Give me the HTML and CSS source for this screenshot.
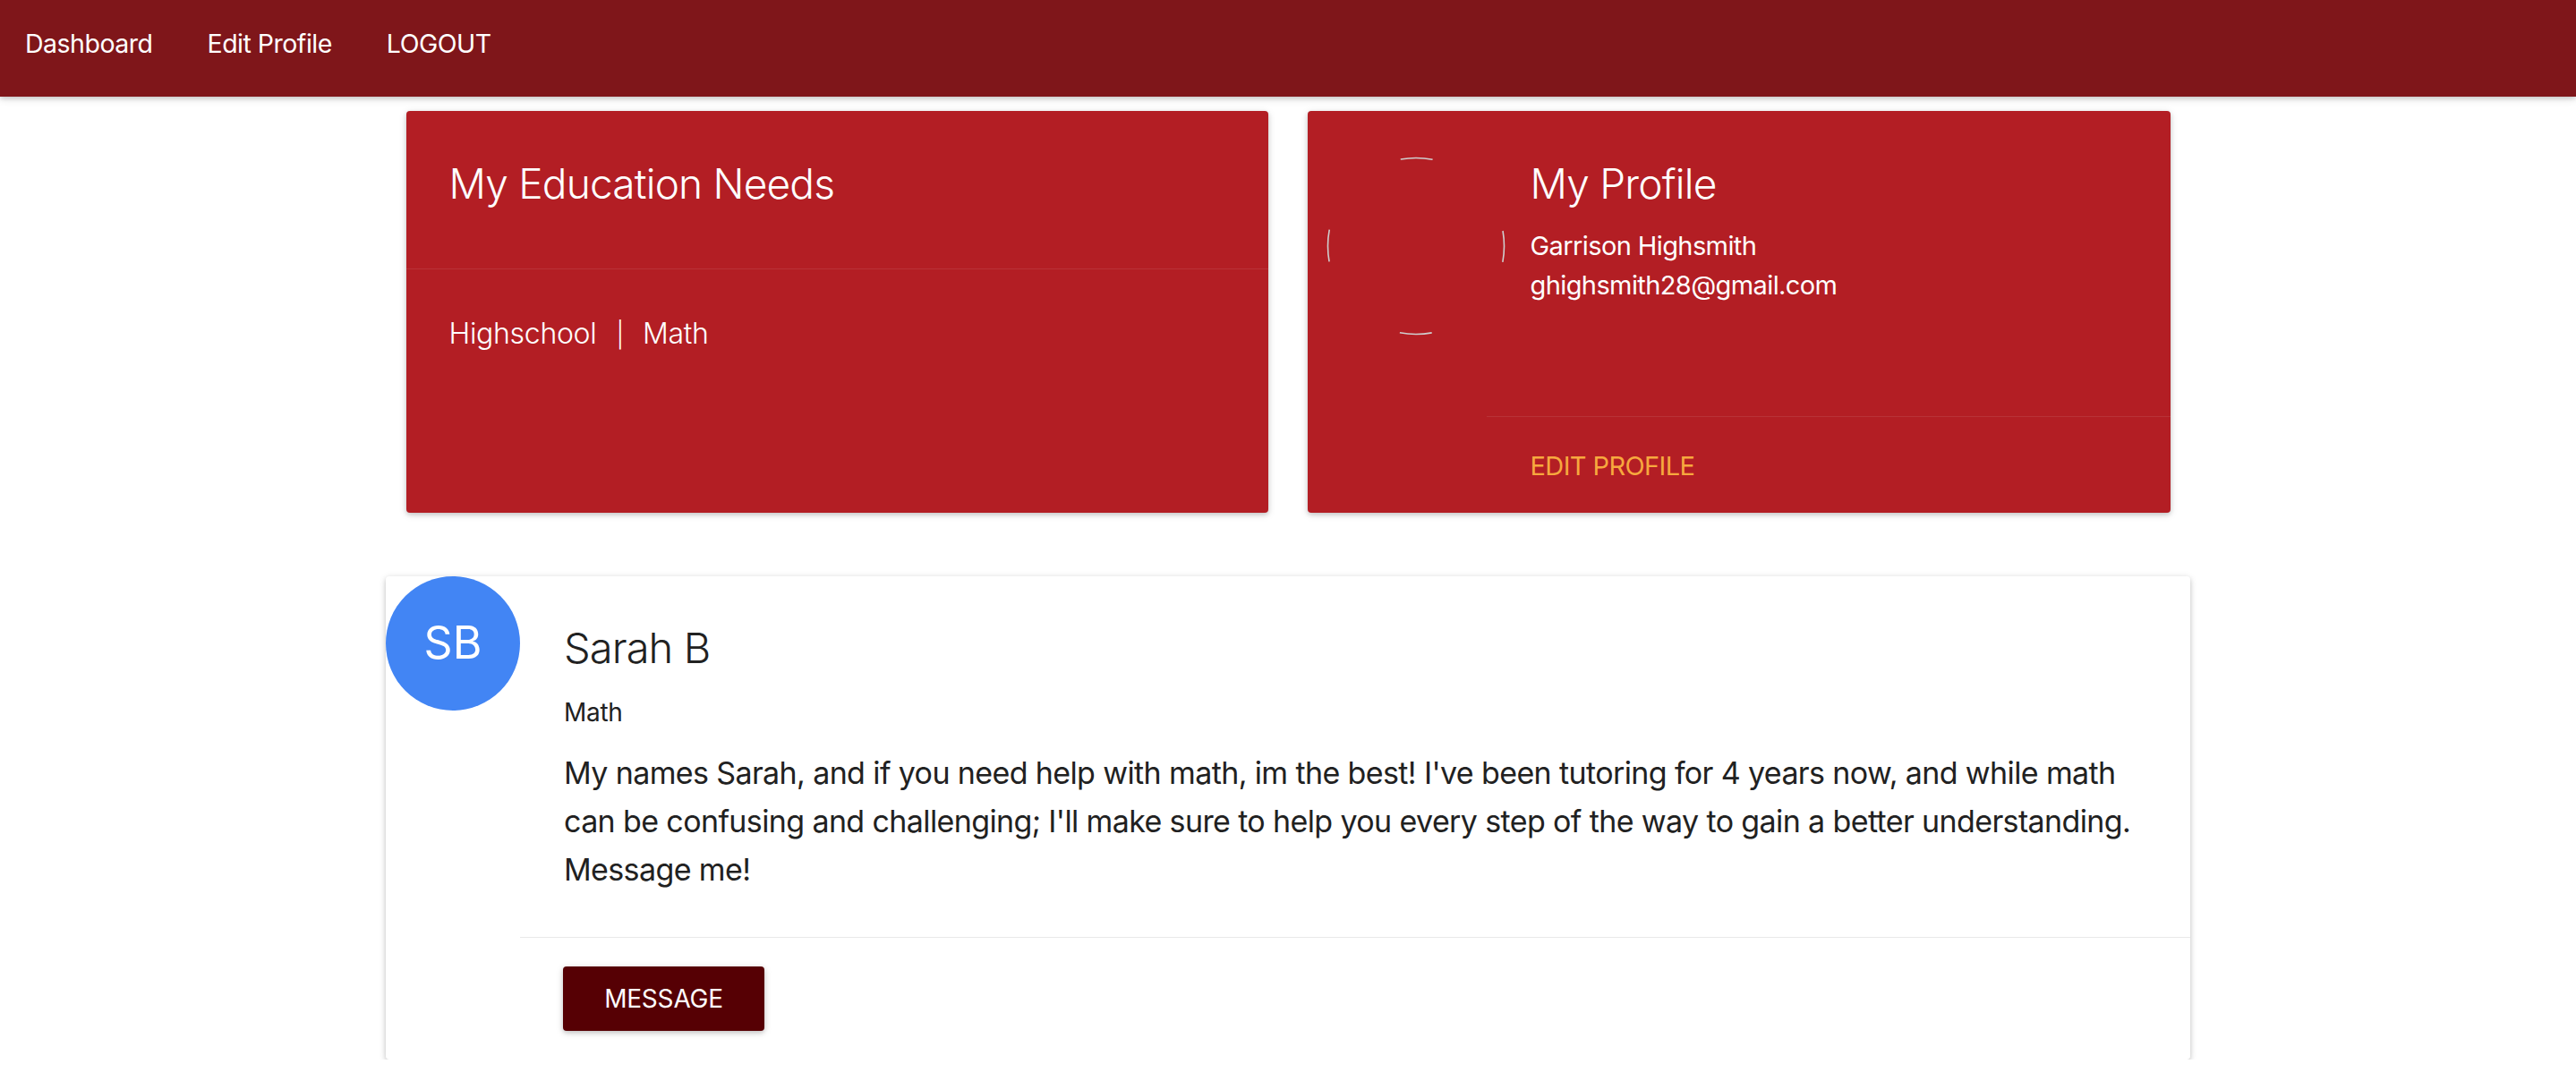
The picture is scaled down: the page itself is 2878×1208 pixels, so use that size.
FILE: index.html
```html
<!DOCTYPE html>
<html lang="en">
<head>
<meta charset="utf-8">
<title>Dashboard</title>
<link rel="stylesheet" href="styles.css">
</head>
<body>
<nav class="navbar">
  <a class="nav-link" href="#">Dashboard</a>
  <a class="nav-link" href="#">Edit Profile</a>
  <a class="nav-link" href="#">LOGOUT</a>
</nav>

<main class="page">
  <section class="top-row">
    <div class="card red-card needs-card">
      <div class="card-header">
        <h2 class="card-title">My Education Needs</h2>
      </div>
      <div class="card-body needs-body">
        <span>Highschool</span><span class="sep">|</span><span>Math</span>
      </div>
    </div>

    <div class="card red-card profile-card">
      <div class="profile-avatar">
        <svg class="ring" width="200" height="200" viewBox="0 0 200 200">
          <circle cx="100" cy="100" r="98.5" fill="none" stroke="#cfcfcf" stroke-width="1.6" stroke-dasharray="36 118.7" stroke-dashoffset="18"/>
        </svg>
      </div>
      <div class="profile-content">
        <div class="profile-body">
          <h2 class="card-title">My Profile</h2>
          <p class="profile-line">Garrison Highsmith</p>
          <p class="profile-line">ghighsmith28@gmail.com</p>
        </div>
        <div class="profile-footer">
          <a class="edit-link" href="#">EDIT PROFILE</a>
        </div>
      </div>
    </div>
  </section>

  <section class="tutor-card card">
    <div class="tutor-avatar">
      <div class="initials">SB</div>
    </div>
    <div class="tutor-content">
      <div class="tutor-body">
        <h3 class="tutor-name">Sarah B</h3>
        <p class="tutor-subject">Math</p>
        <p class="tutor-bio">My names Sarah, and if you need help with math, im the best! I've been tutoring for 4 years now, and while math can be confusing and challenging; I'll make sure to help you every step of the way to gain a better understanding. Message me!</p>
      </div>
      <div class="tutor-footer">
        <button class="message-btn" type="button">MESSAGE</button>
      </div>
    </div>
  </section>
</main>
</body>
</html>
```

FILE: styles.css
```css
* { box-sizing: border-box; }

html, body {
  margin: 0;
  padding: 0;
  background: #ffffff;
}

body {
  font-family: "Inter", "Roboto", "Liberation Sans", sans-serif;
  color: #212121;
}

h2, h3, p { margin: 0; }

.navbar {
  height: 108px;
  background: #7f161a;
  display: flex;
  align-items: center;
  gap: 61px;
  padding: 0 0 10px 28px;
  box-shadow: 0 2px 5px rgba(0,0,0,0.16), 0 2px 10px rgba(0,0,0,0.12);
  position: relative;
  z-index: 2;
}

.nav-link {
  color: #ffffff;
  text-decoration: none;
  font-size: 28.5px;
  line-height: 36px;
  letter-spacing: -0.5px;
}

.page {
  display: flex;
  flex-direction: column;
  align-items: center;
  padding-top: 16px;
}

.top-row {
  display: flex;
  gap: 44px;
}

.card {
  border-radius: 4px;
  box-shadow: 0 2px 5px rgba(0,0,0,0.16), 0 2px 10px rgba(0,0,0,0.12);
}

.red-card {
  background: #b31e24;
  color: #ffffff;
  width: 963px;
  height: 449px;
}

.needs-card {
  display: flex;
  flex-direction: column;
}

.card-header {
  height: 177px;
  padding: 53px 48px 0;
  border-bottom: 1px solid rgba(255,255,255,0.09);
}

.card-title {
  font-size: 46px;
  line-height: 56px;
  font-weight: 300;
  letter-spacing: -0.8px;
}

.needs-body {
  padding: 52px 48px 0;
  font-size: 32px;
  line-height: 40px;
  font-weight: 300;
  letter-spacing: -0.3px;
}

.sep {
  margin: 0 21px 0 22px;
  font-size: 28px;
}

.profile-card {
  display: flex;
  width: 964px;
}

.profile-avatar {
  width: 200px;
  flex: none;
  padding: 51px 0 0 21px;
}

.ring { display: block; overflow: visible; }

.profile-content {
  flex: 1;
  display: flex;
  flex-direction: column;
}

.profile-body {
  flex: 1;
  padding: 53px 50px 0 49px;
}

.profile-line {
  font-size: 29px;
  line-height: 44px;
  letter-spacing: -0.6px;
}

.profile-body .card-title { margin-bottom: 20px; }

.profile-footer {
  height: 108px;
  border-top: 1px solid rgba(255,255,255,0.09);
  padding: 37px 50px 0 49px;
}

.edit-link {
  color: #f7a83e;
  text-decoration: none;
  font-size: 29px;
  line-height: 36px;
  letter-spacing: -0.6px;
}

.tutor-card {
  margin-top: 71px;
  width: 2016px;
  height: 540px;
  background: #ffffff;
  display: flex;
}

.tutor-avatar {
  width: 150px;
  flex: none;
}

.initials {
  width: 150px;
  height: 150px;
  border-radius: 50%;
  background: #4285f4;
  color: #ffffff;
  font-size: 50px;
  display: flex;
  align-items: center;
  justify-content: center;
  padding-bottom: 2px;
}

.tutor-content {
  flex: 1;
  display: flex;
  flex-direction: column;
}

.tutor-body {
  flex: 1;
  padding: 52px 40px 0 49px;
}

.tutor-name {
  font-size: 47px;
  line-height: 56px;
  font-weight: 300;
  letter-spacing: -0.9px;
}

.tutor-subject {
  margin-top: 27px;
  font-size: 28px;
  line-height: 34px;
  letter-spacing: -0.3px;
}

.tutor-bio {
  margin-top: 24px;
  font-size: 34px;
  line-height: 54px;
  letter-spacing: -0.62px;
}

.tutor-footer {
  height: 137px;
  border-top: 1px solid #e9e9e9;
  padding: 32px 48px 0;
}

.message-btn {
  width: 225px;
  height: 72px;
  border: none;
  border-radius: 4px;
  background: #560004;
  color: #ffffff;
  font-family: inherit;
  font-size: 28px;
  letter-spacing: -0.2px;
  box-shadow: 0 2px 5px rgba(0,0,0,0.16), 0 2px 10px rgba(0,0,0,0.12);
  cursor: pointer;
}
```
